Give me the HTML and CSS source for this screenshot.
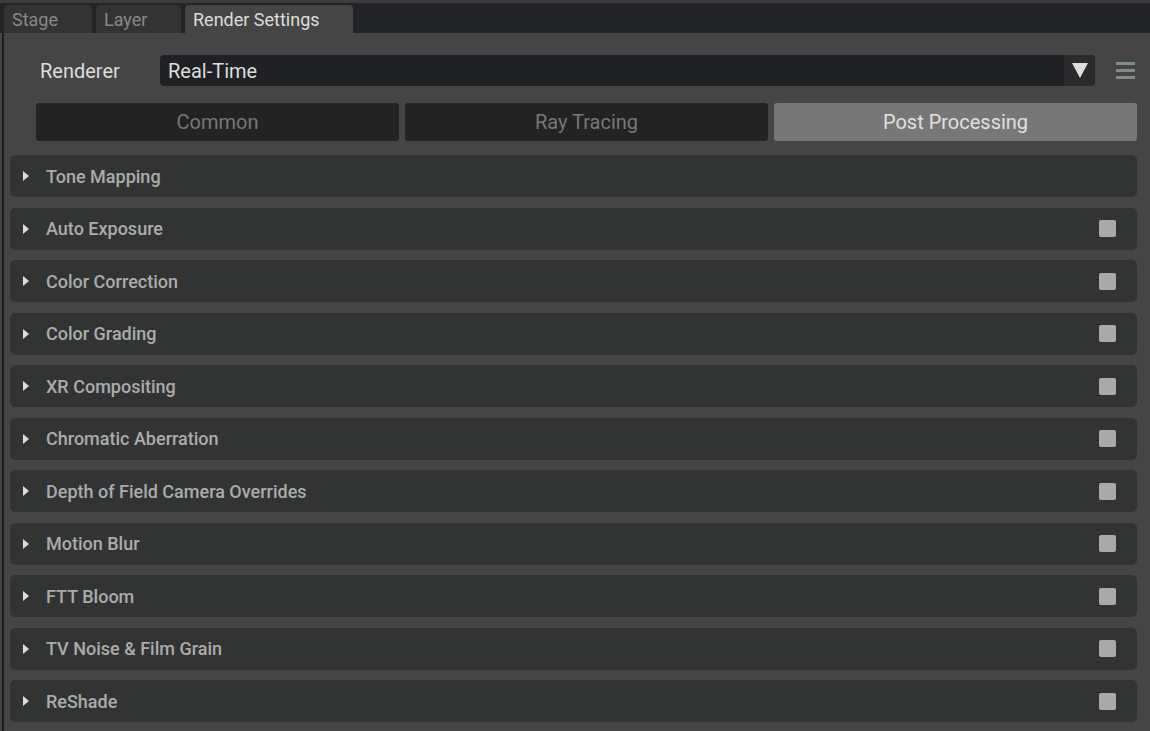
FILE: index.html
```html
<!DOCTYPE html>
<html>
<head>
  <meta charset="utf-8">
  <title>Render Settings</title>
  <link rel="stylesheet" href="styles.css">
</head>
<body>
  <div class="tabbar">
    <div class="tab">Stage</div>
    <div class="tab">Layer</div>
    <div class="tab active">Render Settings</div>
  </div>

  <div class="panel">
    <div class="renderer-row">
      <span class="renderer-label">Renderer</span>
      <div class="dropdown">
        <span class="dropdown-value">Real-Time</span>
        <span class="dropdown-arrow"><span class="arrow-down"></span></span>
      </div>
      <div class="menu-icon">
        <span></span><span></span><span></span>
      </div>
    </div>

    <div class="mode-tabs">
      <div class="mode-tab">Common</div>
      <div class="mode-tab">Ray Tracing</div>
      <div class="mode-tab selected">Post Processing</div>
    </div>

    <div class="sections">
      <div class="section"><span class="caret"></span><span class="section-title">Tone Mapping</span></div>
      <div class="section"><span class="caret"></span><span class="section-title">Auto Exposure</span><span class="check"></span></div>
      <div class="section"><span class="caret"></span><span class="section-title">Color Correction</span><span class="check"></span></div>
      <div class="section"><span class="caret"></span><span class="section-title">Color Grading</span><span class="check"></span></div>
      <div class="section"><span class="caret"></span><span class="section-title">XR Compositing</span><span class="check"></span></div>
      <div class="section"><span class="caret"></span><span class="section-title">Chromatic Aberration</span><span class="check"></span></div>
      <div class="section"><span class="caret"></span><span class="section-title">Depth of Field Camera Overrides</span><span class="check"></span></div>
      <div class="section"><span class="caret"></span><span class="section-title">Motion Blur</span><span class="check"></span></div>
      <div class="section"><span class="caret"></span><span class="section-title">FTT Bloom</span><span class="check"></span></div>
      <div class="section"><span class="caret"></span><span class="section-title">TV Noise &amp; Film Grain</span><span class="check"></span></div>
      <div class="section"><span class="caret"></span><span class="section-title">ReShade</span><span class="check"></span></div>
    </div>
  </div>
</body>
</html>
```

FILE: styles.css
```css
html, body {
  margin: 0;
  height: 100%;
  background-color: #454545;
  font-family: Roboto, "Liberation Sans", sans-serif;
  overflow: hidden;
}

/* top tab strip */
.tabbar {
  display: flex;
  gap: 4px;
  height: 33px;
  padding: 2px 0 0 4px;
  box-sizing: border-box;
  border-top: 3px solid #3c3c3c;
  background-color: #232428;
  align-items: flex-end;
}

.tab {
  height: 28px;
  line-height: 29px;
  padding: 0 8px;
  font-size: 18px;
  color: #888888;
  background-color: #333333;
  border-radius: 4px 4px 0 0;
}

.tab:nth-child(1) { width: 72px; }
.tab:nth-child(2) { width: 69px; }
.tab.active {
  width: 152px;
  color: #dddddd;
  background-color: #454545;
}

.panel {
  margin-left: 2px;
  border-left: 2px solid #1e1e20;
  height: calc(100% - 33px);
  box-sizing: border-box;
  padding: 22px 13px 0 6px;
}

/* renderer selector */
.renderer-row {
  display: flex;
  align-items: center;
  height: 31px;
}

.renderer-label {
  flex: none;
  width: 150px;
  padding-left: 30px;
  box-sizing: border-box;
  font-size: 20px;
  color: #dddddd;
}

.dropdown {
  flex: none;
  width: 935px;
  height: 31px;
  display: flex;
  background-color: #202125;
  border-radius: 4px;
  overflow: hidden;
}

.dropdown-value {
  flex: 1;
  padding-left: 8px;
  line-height: 32px;
  font-size: 20px;
  color: #dddddd;
}

.dropdown-arrow {
  width: 31px;
  display: flex;
  align-items: center;
  justify-content: center;
  background-color: #2a2a2b;
}

.arrow-down {
  width: 0;
  height: 0;
  border-left: 8px solid transparent;
  border-right: 8px solid transparent;
  border-top: 15px solid #dddddd;
}

.menu-icon {
  margin-left: 21px;
  display: flex;
  flex-direction: column;
  gap: 4px;
}

.menu-icon span {
  display: block;
  width: 19px;
  height: 3px;
  background-color: #7e8c8c;
}

/* common / ray tracing / post processing */
.mode-tabs {
  display: flex;
  gap: 6px;
  margin: 17px 0 14px 26px;
}

.mode-tab {
  flex: 1;
  height: 38px;
  line-height: 39px;
  text-align: center;
  font-size: 20px;
  color: #777777;
  background-color: #232323;
  border-radius: 3px;
}

.mode-tab.selected {
  color: #e0e0e0;
  background-color: #777777;
}

/* collapsible sections */
.sections {
  display: flex;
  flex-direction: column;
  gap: 10.5px;
}

.section {
  height: 42px;
  display: flex;
  align-items: center;
  background-color: #323434;
  border-radius: 5px;
}

.caret {
  width: 0;
  height: 0;
  margin-left: 13px;
  border-top: 5px solid transparent;
  border-bottom: 5px solid transparent;
  border-left: 6px solid #dddddd;
}

.section-title {
  flex: 1;
  margin-left: 17px;
  font-size: 18px;
  font-weight: 500;
  color: #ababab;
}

.check {
  width: 17px;
  height: 17px;
  margin-right: 21px;
  background-color: #a9a9a9;
  border-radius: 2px;
}
```
